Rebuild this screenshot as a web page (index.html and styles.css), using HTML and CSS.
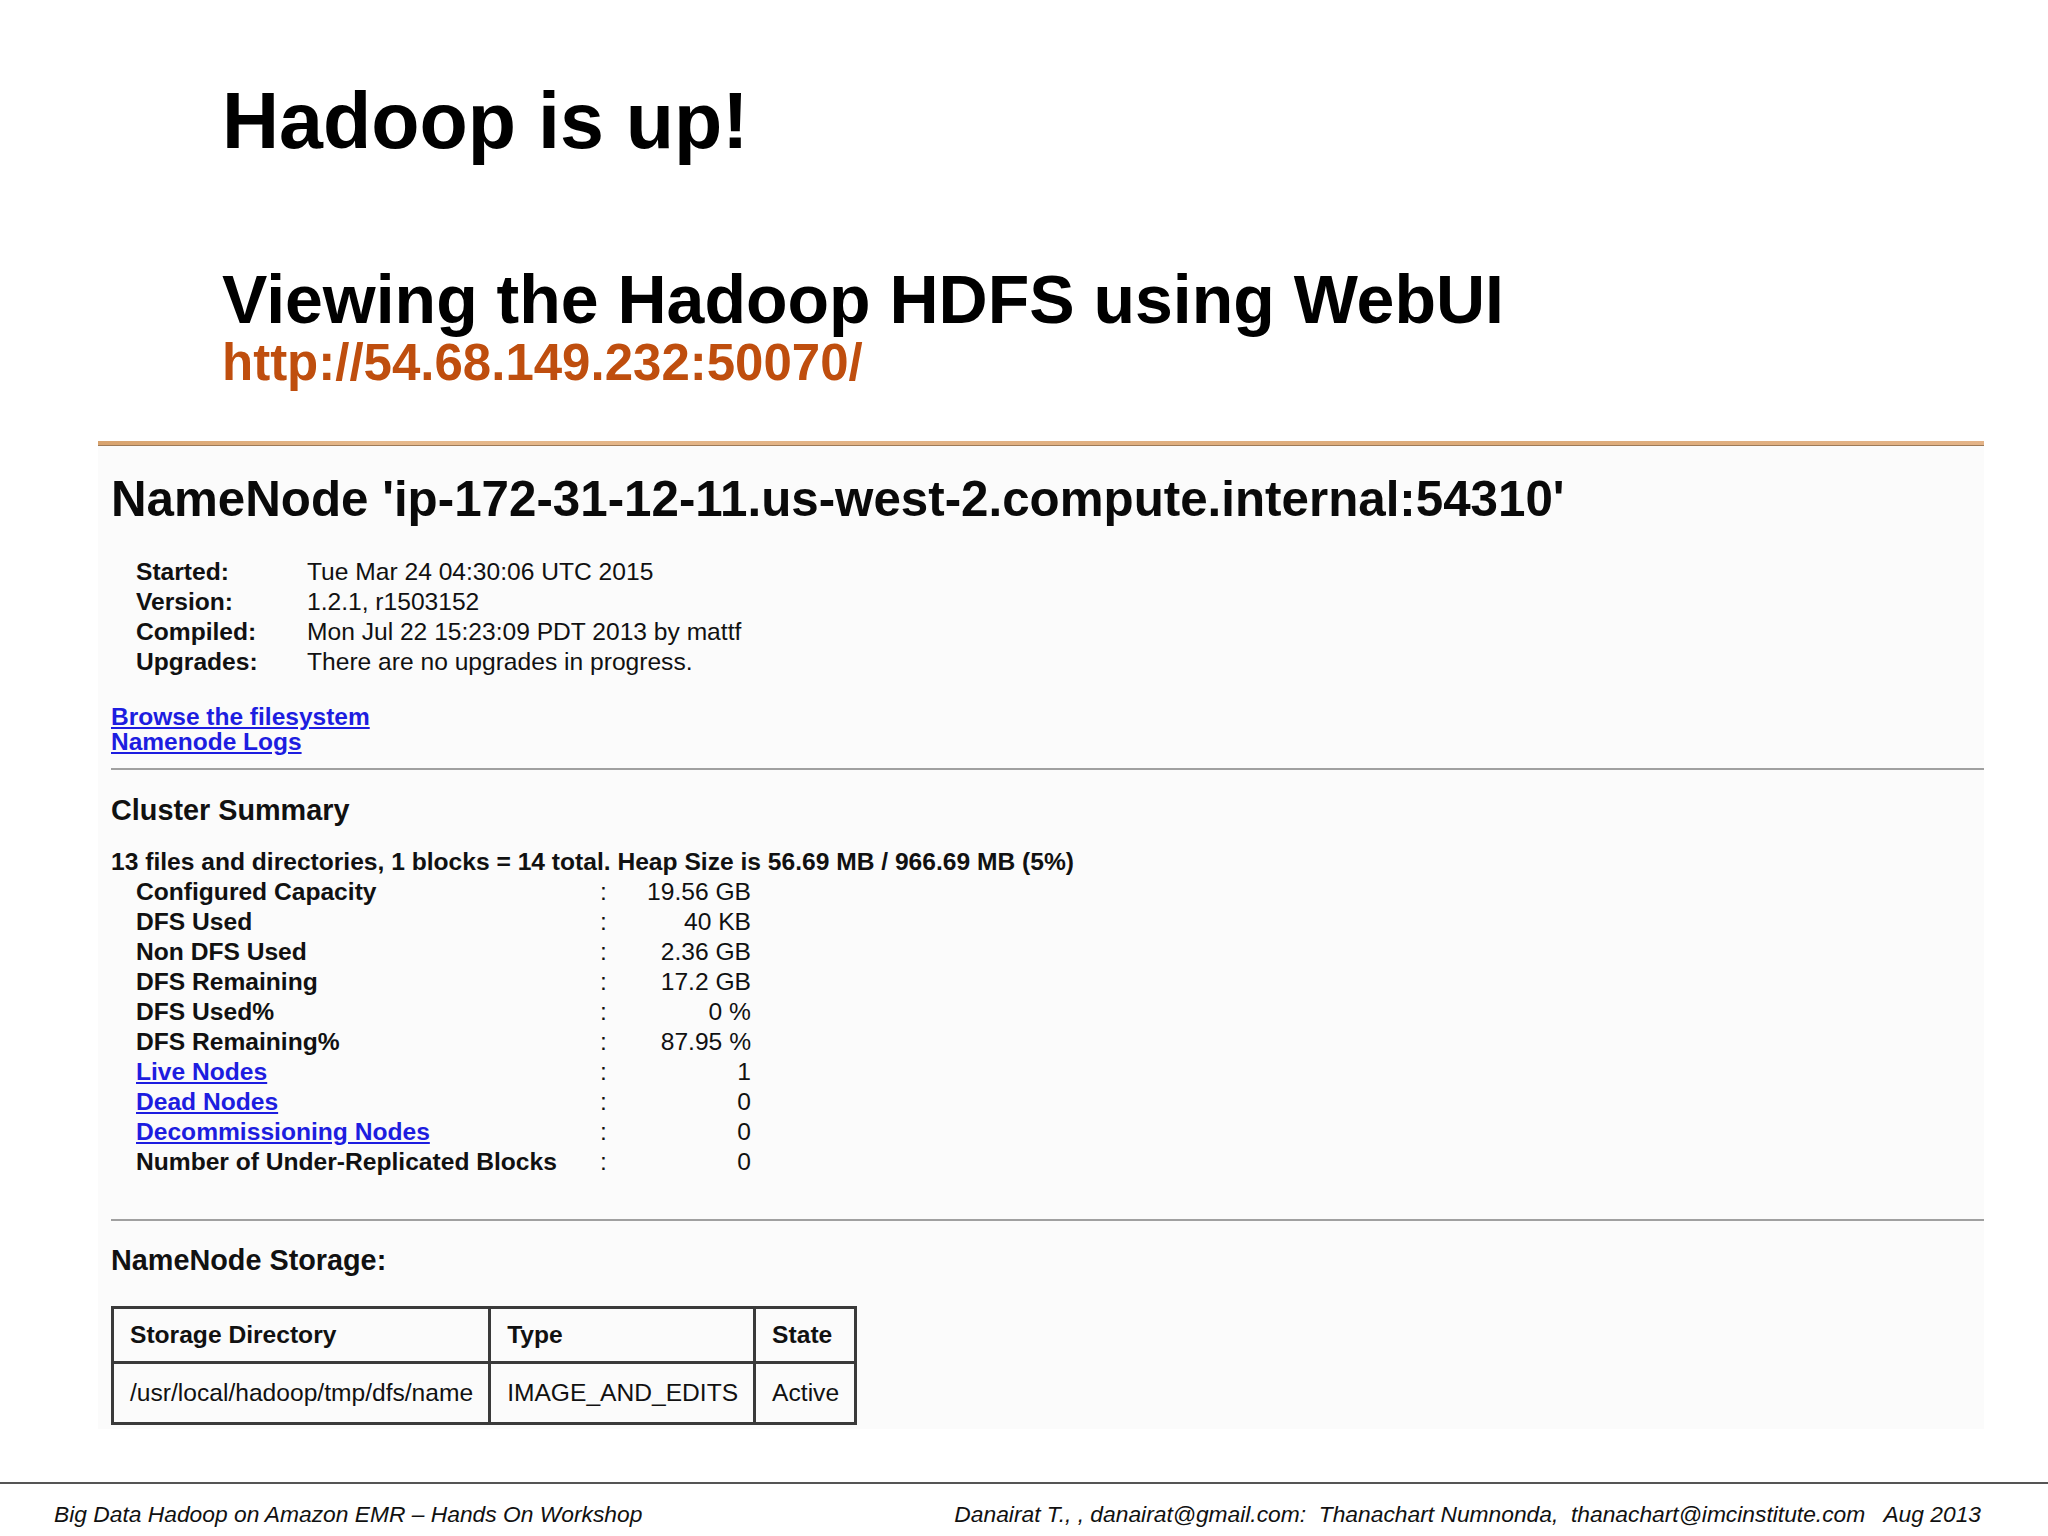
FILE: index.html
```html
<!DOCTYPE html>
<html lang="en">
<head>
<meta charset="utf-8">
<title>Hadoop is up!</title>
<link rel="stylesheet" href="styles.css">
</head>
<body>
<div class="slide">
  <header class="titles">
    <h1 class="title">Hadoop is up!</h1>
    <h2 class="subtitle">Viewing the Hadoop HDFS using WebUI</h2>
    <div class="url">http://54.68.149.232:50070/</div>
  </header>

  <section class="shot">
    <div class="shot-rule"></div>
    <div class="shot-body">
      <h3 class="nn-title">NameNode 'ip-172-31-12-11.us-west-2.compute.internal:54310'</h3>

      <div class="info">
        <div class="info-label">Started:</div><div class="info-value">Tue Mar 24 04:30:06 UTC 2015</div>
        <div class="info-label">Version:</div><div class="info-value">1.2.1, r1503152</div>
        <div class="info-label">Compiled:</div><div class="info-value">Mon Jul 22 15:23:09 PDT 2013 by mattf</div>
        <div class="info-label">Upgrades:</div><div class="info-value">There are no upgrades in progress.</div>
      </div>

      <div class="links">
        <a class="link" href="#">Browse the filesystem</a>
        <a class="link" href="#">Namenode Logs</a>
      </div>

      <hr class="rule">

      <h4 class="section-title">Cluster Summary</h4>
      <div class="summary-line">13 files and directories, 1 blocks = 14 total. Heap Size is 56.69 MB / 966.69 MB (5%)</div>

      <div class="stats">
        <div class="stat-label">Configured Capacity</div><div class="stat-colon">:</div><div class="stat-value">19.56 GB</div>
        <div class="stat-label">DFS Used</div><div class="stat-colon">:</div><div class="stat-value">40 KB</div>
        <div class="stat-label">Non DFS Used</div><div class="stat-colon">:</div><div class="stat-value">2.36 GB</div>
        <div class="stat-label">DFS Remaining</div><div class="stat-colon">:</div><div class="stat-value">17.2 GB</div>
        <div class="stat-label">DFS Used%</div><div class="stat-colon">:</div><div class="stat-value">0 %</div>
        <div class="stat-label">DFS Remaining%</div><div class="stat-colon">:</div><div class="stat-value">87.95 %</div>
        <div class="stat-label"><a class="link" href="#">Live Nodes</a></div><div class="stat-colon">:</div><div class="stat-value">1</div>
        <div class="stat-label"><a class="link" href="#">Dead Nodes</a></div><div class="stat-colon">:</div><div class="stat-value">0</div>
        <div class="stat-label"><a class="link" href="#">Decommissioning Nodes</a></div><div class="stat-colon">:</div><div class="stat-value">0</div>
        <div class="stat-label">Number of Under-Replicated Blocks</div><div class="stat-colon">:</div><div class="stat-value">0</div>
      </div>

      <hr class="rule rule-lower">

      <h4 class="section-title storage-title">NameNode Storage:</h4>

      <table class="storage">
        <thead>
          <tr class="storage-head">
            <th>Storage Directory</th><th>Type</th><th>State</th>
          </tr>
        </thead>
        <tbody>
          <tr class="storage-row">
            <td>/usr/local/hadoop/tmp/dfs/name</td><td>IMAGE_AND_EDITS</td><td>Active</td>
          </tr>
        </tbody>
      </table>
    </div>
  </section>

  <footer class="footer">
    <span class="foot-left">Big Data Hadoop on Amazon EMR – Hands On Workshop</span>
    <span class="foot-right">Danairat T., , danairat@gmail.com:  Thanachart Numnonda,  thanachart@imcinstitute.com   Aug 2013</span>
  </footer>
</div>
</body>
</html>
```

FILE: styles.css
```css
* { box-sizing: border-box; }

html, body {
  margin: 0;
  padding: 0;
  background: #ffffff;
}

body {
  font-family: "Liberation Sans", Arial, Helvetica, sans-serif;
  color: #000;
}

.slide {
  width: 2048px;
  height: 1536px;
  overflow: hidden;
  background: #ffffff;
  display: flex;
  flex-direction: column;
}

/* ---------- Slide titles ---------- */
.titles {
  padding: 81px 0 0 222px;
}

.title {
  margin: 0;
  font-size: 79px;
  line-height: 80px;
  font-weight: bold;
}

.subtitle {
  margin: 104px 0 0;
  font-size: 68px;
  line-height: 68px;
  font-weight: bold;
}

.url {
  margin-top: 4px;
  font-size: 51px;
  line-height: 52px;
  font-weight: bold;
  color: #bf4e0e;
}

/* ---------- Embedded screenshot ---------- */
.shot {
  margin: 52px 64px 0 98px;
  background: #fbfbfb;
}

.shot-rule {
  height: 5px;
  background: linear-gradient(90deg, #d8a36e 0%, #e6b98c 15%, #e2b284 45%, #dcaa78 75%, #e4b488 100%);
  border-bottom: 1px solid #9d7a58;
}

.shot-body {
  padding: 28px 0 4px 13px;
}

.nn-title {
  margin: 0;
  font-size: 49.3px;
  line-height: 49px;
  font-weight: bold;
  color: #0a0a0a;
}

.info {
  margin: 34px 0 0 25px;
  display: grid;
  grid-template-columns: 171px auto;
  grid-auto-rows: 30px;
  font-size: 24.6px;
  line-height: 30px;
  color: #111;
}

.info-label { font-weight: bold; }

.links {
  margin-top: 27px;
  display: flex;
  flex-direction: column;
  align-items: flex-start;
  font-size: 24.5px;
  line-height: 25px;
  font-weight: bold;
}

.link {
  color: #1d1de0;
  text-decoration: underline;
  font-weight: bold;
}

.rule {
  margin: 14px 0 0;
  border: 0;
  height: 2px;
  background: #a0a0a0;
}

.rule-lower { margin-top: 42px; }

.section-title {
  margin: 23px 0 0;
  font-size: 28.8px;
  line-height: 34px;
  font-weight: bold;
  color: #111;
}

.storage-title { margin-top: 22px; }

.summary-line {
  margin-top: 20px;
  font-size: 24.6px;
  line-height: 30px;
  font-weight: bold;
  color: #111;
}

.stats {
  margin-left: 25px;
  display: grid;
  grid-template-columns: 464px 20px 131px;
  grid-auto-rows: 30px;
  font-size: 24.6px;
  line-height: 30px;
  color: #111;
}

.stat-label { font-weight: bold; }
.stat-colon { text-align: left; }
.stat-value { text-align: right; }

.storage {
  margin-top: 29px;
  border-collapse: collapse;
  font-size: 24.6px;
  color: #111;
}

.storage th,
.storage td {
  border: 3px solid #3a3a3a;
  padding: 0 15px 0 16px;
  text-align: left;
  white-space: nowrap;
}

.storage th { font-weight: bold; }

.storage-head { height: 55px; }
.storage-row { height: 61px; }

/* ---------- Footer ---------- */
.footer {
  margin-top: auto;
  margin-bottom: 7px;
  border-top: 2px solid #555;
  padding: 15px 67px 0 54px;
  display: flex;
  justify-content: space-between;
  font-size: 22.8px;
  line-height: 30px;
  font-style: italic;
  color: #111;
}

.foot-right { white-space: pre; }
```
